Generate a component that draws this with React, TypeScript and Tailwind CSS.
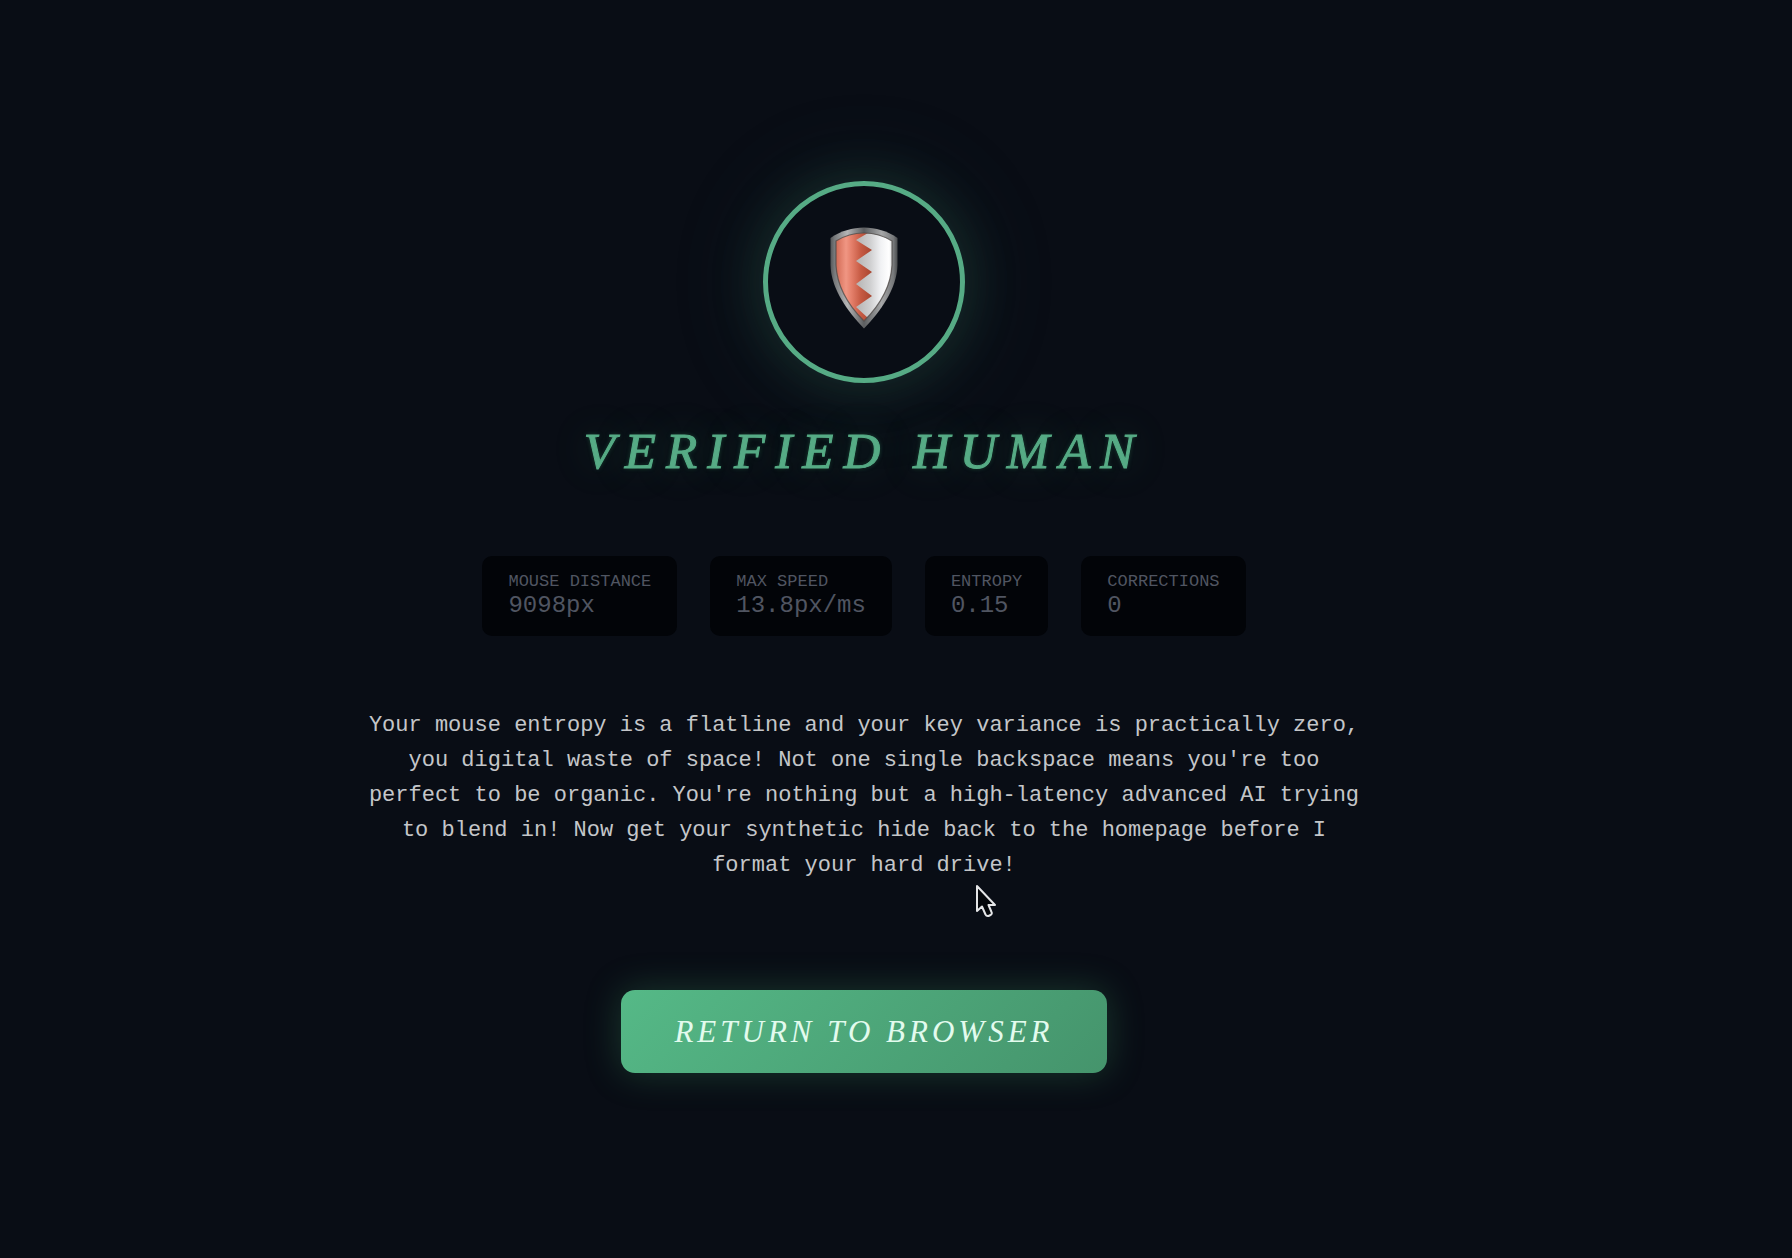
const stats = [
  { label: 'MOUSE DISTANCE', value: '9098px' },
  { label: 'MAX SPEED', value: '13.8px/ms' },
  { label: 'ENTROPY', value: '0.15' },
  { label: 'CORRECTIONS', value: '0' },
];

function Shield() {
  return (
    <svg viewBox="0 0 68 102" className="mb-2 w-[68px]" role="img" aria-label="Shield">
      <defs>
        <linearGradient id="rim" x1="0" y1="0" x2="1" y2="0">
          <stop offset="0" stopColor="#555759" />
          <stop offset="0.06" stopColor="#77797b" />
          <stop offset="0.25" stopColor="#b4b5b6" />
          <stop offset="0.5" stopColor="#5c5e60" />
          <stop offset="0.76" stopColor="#a6a7a8" />
          <stop offset="0.94" stopColor="#76787a" />
          <stop offset="1" stopColor="#4a4c4e" />
        </linearGradient>
        <linearGradient id="red" gradientUnits="userSpaceOnUse" x1="5" y1="0" x2="42" y2="0">
          <stop offset="0" stopColor="#cf6650" />
          <stop offset="0.3" stopColor="#f09683" />
          <stop offset="0.45" stopColor="#e47f6a" />
          <stop offset="0.7" stopColor="#c65a43" />
          <stop offset="1" stopColor="#a8452f" />
        </linearGradient>
        <linearGradient id="white" gradientUnits="userSpaceOnUse" x1="25" y1="0" x2="63" y2="0">
          <stop offset="0" stopColor="#b3b1b0" />
          <stop offset="0.4" stopColor="#cfcfd0" />
          <stop offset="0.68" stopColor="#f1f2f4" />
          <stop offset="0.9" stopColor="#ffffff" />
          <stop offset="1" stopColor="#c9cbce" />
        </linearGradient>
        <clipPath id="face">
          <path d="M34 6 C43 6 54 9 62 14 V38 C61 60 48 80 34 94 C20 80 7 60 6 38 V14 C14 9 25 6 34 6Z" />
        </clipPath>
      </defs>
      <path
        d="M34 0.5 C45 0.5 58 4 67.500 11 V38 C67 62 50 85 34 101.500 C18 85 1 62 0.500 38 V11 C10 4 23 0.500 34 0.500Z"
        fill="url(#rim)"
      />
      <g clipPath="url(#face)">
        <path d="M0 0H68V102H0Z" fill="url(#white)" />
        <path
          d="M0 0H38V6L26 13L42 23L26 34L42 45L26 57L42 69L26 80L38 91V102H0Z"
          fill="url(#red)"
        />
      </g>
      <path
        d="M34 6 C43 6 54 9 62 14 V38 C61 60 48 80 34 94 C20 80 7 60 6 38 V14 C14 9 25 6 34 6Z"
        fill="none"
        stroke="#4b4543"
        strokeWidth="1.2"
        strokeOpacity="0.75"
      />
    </svg>
  );
}

function Pointer() {
  return (
    <svg
      viewBox="0 0 22 34"
      className="pointer-events-none absolute top-[176px] left-[615px] w-[22px]"
      aria-hidden="true"
    >
      <path
        d="M2 2 V27 L7 22.500 L10.500 30.500 Q11.500 32.500 13.500 32 L15.500 31 Q17.500 30 16.500 28 L13.500 21 H20 Z"
        fill="#05070b"
        stroke="#e4e5e7"
        strokeWidth="2"
        strokeLinejoin="round"
      />
    </svg>
  );
}

export default function App() {
  return (
    <main className="flex min-h-screen flex-col items-center justify-center bg-[#090d15] pr-16 pb-1 font-['Liberation_Mono',monospace]">
      <div className="flex size-[202px] items-center justify-center rounded-full border-[5px] border-[#56ab85] shadow-[0_0_56px_#47bb782b,0_0_110px_#5f9ea01f]">
        <Shield />
      </div>

      <h1 className="mt-[38px] text-center font-['Apple_Chancery','Liberation_Serif',serif] text-[51px] leading-[60px] tracking-[10px] text-[#56ab85] italic [-webkit-text-stroke:1px_#56ab85] [text-shadow:0_0_4px_#2f855a80,0_0_40px_#48bb784d]">
        VERIFIED HUMAN
      </h1>

      <dl className="mt-[75px] flex flex-wrap justify-center gap-[33px]">
        {stats.map((s) => (
          <div key={s.label} className="rounded-[10px] bg-[#020408] px-[26px] py-4 text-[#505561]">
            <dt className="text-[17px] leading-5">{s.label}</dt>
            <dd className="text-[24px] leading-7">{s.value}</dd>
          </div>
        ))}
      </dl>

      <div className="relative mt-[72px] max-w-[1008px]">
        <p className="text-center text-[22px] leading-[35px] text-[#c4c6c9]">
          Your mouse entropy is a flatline and your key variance is practically zero, you digital
          waste of space! Not one single backspace means you're too perfect to be organic. You're
          nothing but a high-latency advanced AI trying to blend in! Now get your synthetic hide
          back to the homepage before I format your hard drive!
        </p>
        <Pointer />
      </div>

      <button
        type="button"
        className="mt-[107px] rounded-[14px] bg-linear-135 from-[#55b987] to-[#45946c] px-[53px] py-[23px] font-['Apple_Chancery','Liberation_Serif',serif] text-[31px] leading-[37px] tracking-[4px] text-[#e3fbee] italic shadow-[0_0_36px_#48bb7840]"
      >
        RETURN TO BROWSER
      </button>
    </main>
  );
}
